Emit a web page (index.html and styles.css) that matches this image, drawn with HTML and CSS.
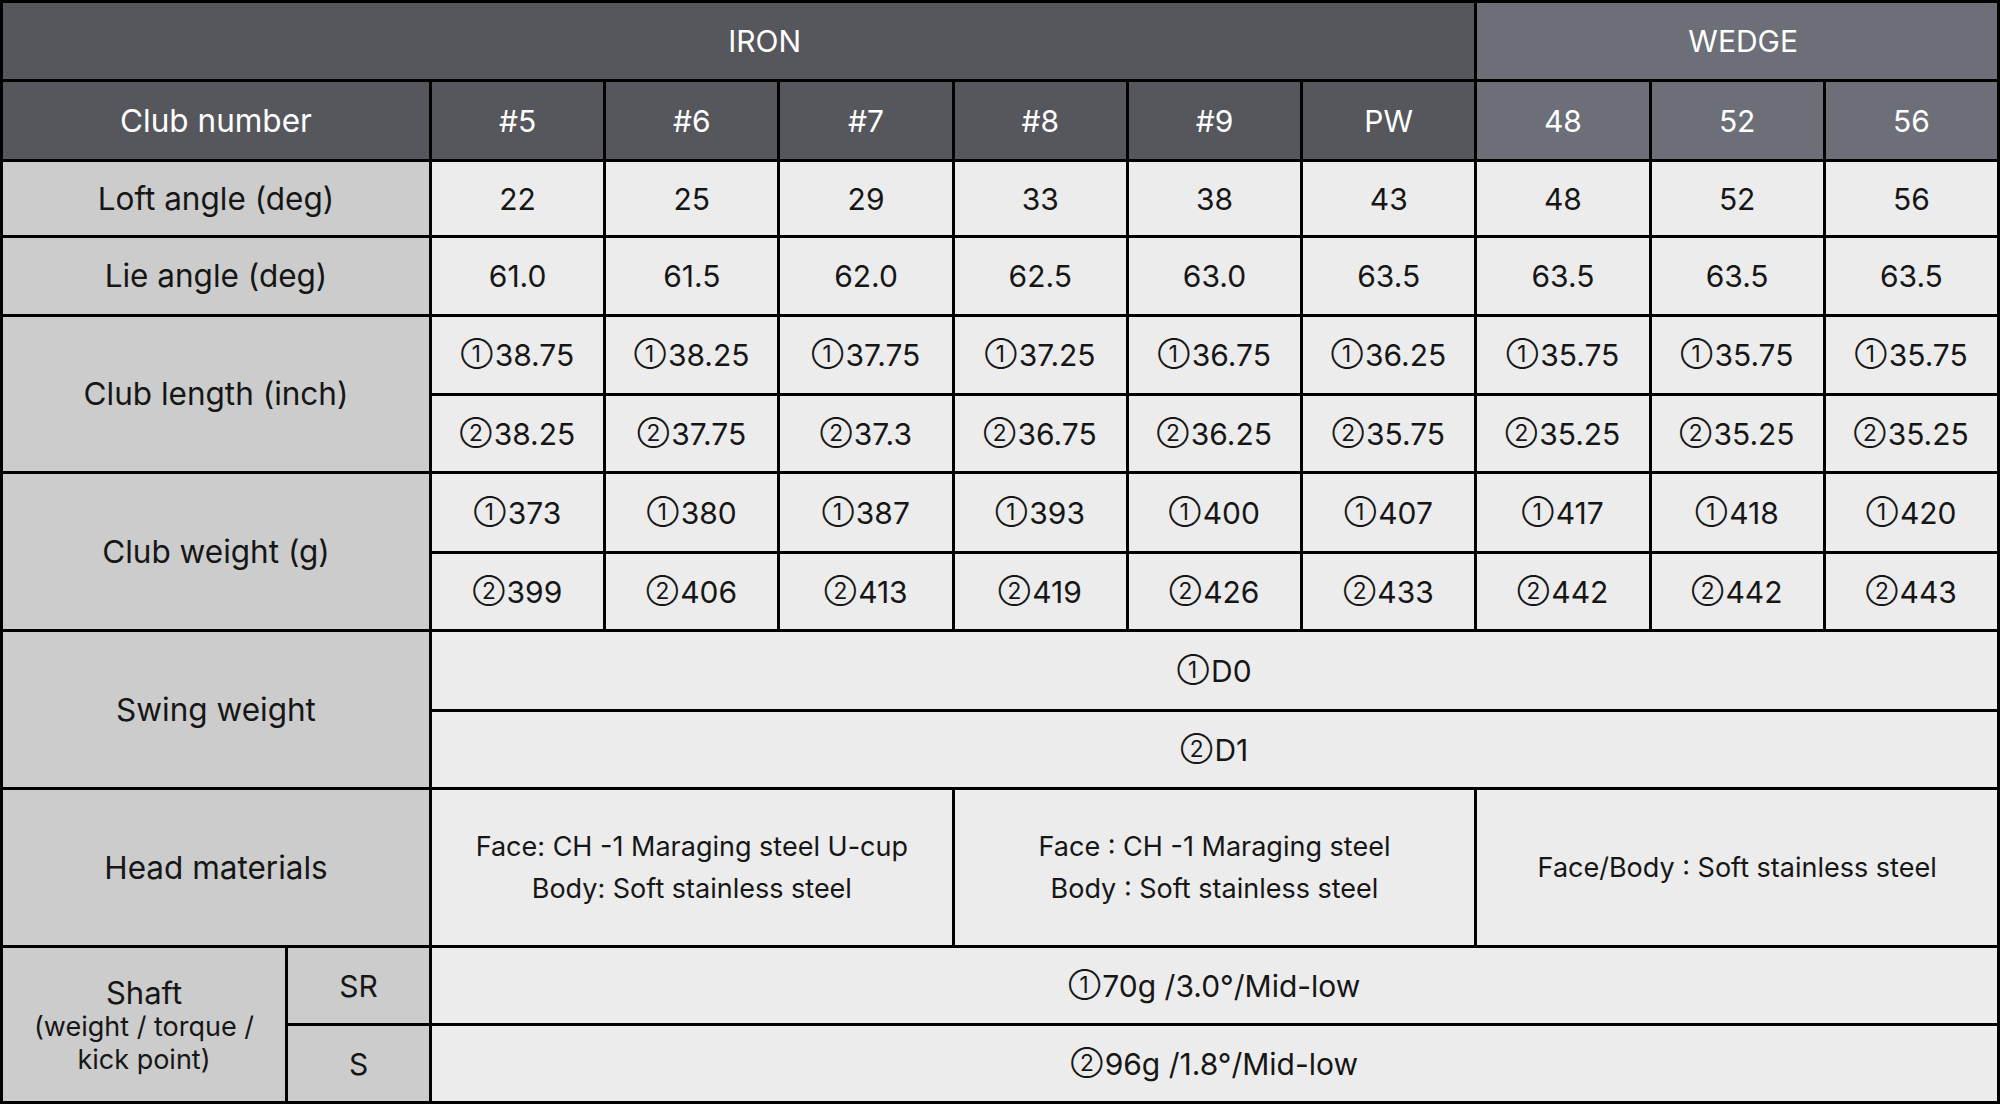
FILE: index.html
```html
<!DOCTYPE html>
<html lang="en">
<head>
<meta charset="utf-8">
<title>Iron / Wedge specifications</title>
<link rel="stylesheet" href="styles.css">
</head>
<body>
<div class="spec">
  <div class="cell head iron c8 iron-title">IRON</div>
  <div class="cell head wedge c3 wedge-title">WEDGE</div>

  <div class="cell head iron c2 big">Club number</div>
  <div class="cell head iron">#5</div>
  <div class="cell head iron">#6</div>
  <div class="cell head iron">#7</div>
  <div class="cell head iron">#8</div>
  <div class="cell head iron">#9</div>
  <div class="cell head iron">PW</div>
  <div class="cell head wedge">48</div>
  <div class="cell head wedge">52</div>
  <div class="cell head wedge">56</div>

  <div class="cell label c2 big">Loft angle (deg)</div>
  <div class="cell">22</div><div class="cell">25</div><div class="cell">29</div><div class="cell">33</div><div class="cell">38</div><div class="cell">43</div><div class="cell">48</div><div class="cell">52</div><div class="cell">56</div>

  <div class="cell label c2 big">Lie angle (deg)</div>
  <div class="cell">61.0</div><div class="cell">61.5</div><div class="cell">62.0</div><div class="cell">62.5</div><div class="cell">63.0</div><div class="cell">63.5</div><div class="cell">63.5</div><div class="cell">63.5</div><div class="cell">63.5</div>

  <div class="cell label c2 r2 big">Club length (inch)</div>
  <div class="cell"><span class="n">①</span>38.75</div><div class="cell"><span class="n">①</span>38.25</div><div class="cell"><span class="n">①</span>37.75</div><div class="cell"><span class="n">①</span>37.25</div><div class="cell"><span class="n">①</span>36.75</div><div class="cell"><span class="n">①</span>36.25</div><div class="cell"><span class="n">①</span>35.75</div><div class="cell"><span class="n">①</span>35.75</div><div class="cell"><span class="n">①</span>35.75</div>
  <div class="cell"><span class="n">②</span>38.25</div><div class="cell"><span class="n">②</span>37.75</div><div class="cell"><span class="n">②</span>37.3</div><div class="cell"><span class="n">②</span>36.75</div><div class="cell"><span class="n">②</span>36.25</div><div class="cell"><span class="n">②</span>35.75</div><div class="cell"><span class="n">②</span>35.25</div><div class="cell"><span class="n">②</span>35.25</div><div class="cell"><span class="n">②</span>35.25</div>

  <div class="cell label c2 r2 big">Club weight (g)</div>
  <div class="cell"><span class="n">①</span>373</div><div class="cell"><span class="n">①</span>380</div><div class="cell"><span class="n">①</span>387</div><div class="cell"><span class="n">①</span>393</div><div class="cell"><span class="n">①</span>400</div><div class="cell"><span class="n">①</span>407</div><div class="cell"><span class="n">①</span>417</div><div class="cell"><span class="n">①</span>418</div><div class="cell"><span class="n">①</span>420</div>
  <div class="cell"><span class="n">②</span>399</div><div class="cell"><span class="n">②</span>406</div><div class="cell"><span class="n">②</span>413</div><div class="cell"><span class="n">②</span>419</div><div class="cell"><span class="n">②</span>426</div><div class="cell"><span class="n">②</span>433</div><div class="cell"><span class="n">②</span>442</div><div class="cell"><span class="n">②</span>442</div><div class="cell"><span class="n">②</span>443</div>

  <div class="cell label c2 r2 big">Swing weight</div>
  <div class="cell c9"><span class="n">①</span>D0</div>
  <div class="cell c9"><span class="n">②</span>D1</div>

  <div class="cell label c2 big">Head materials</div>
  <div class="cell mat c3">Face: CH -1 Maraging steel U-cup<br>Body: Soft stainless steel</div>
  <div class="cell mat c3">Face : CH -1 Maraging steel<br>Body : Soft stainless steel</div>
  <div class="cell mat c3">Face/Body : Soft stainless steel</div>

  <div class="cell label r2 shaft"><span class="shaft-main">Shaft</span><span class="shaft-sub">(weight / torque /<br>kick point)</span></div>
  <div class="cell label">SR</div>
  <div class="cell c9"><span class="n">①</span>70g /3.0°/Mid-low</div>
  <div class="cell label">S</div>
  <div class="cell c9"><span class="n">②</span>96g /1.8°/Mid-low</div>
</div>
</body>
</html>
```

FILE: styles.css
```css
html, body {
  margin: 0;
  padding: 0;
  background: #000;
}

.spec {
  width: 2000px;
  height: 1104px;
  box-sizing: border-box;
  display: grid;
  grid-template-columns: 282px 141px repeat(9, 1fr);
  grid-template-rows: 76px 77px 73px 76px 76px 75px 77px 75px 77px 75px 155px 75px 75px;
  gap: 3px;
  padding: 3px;
  background: #000;
  font-family: Inter, "DejaVu Sans", sans-serif;
  color: #161616;
}

.cell {
  display: flex;
  align-items: center;
  justify-content: center;
  text-align: center;
  background: #ececec;
  font-size: 30px;
  line-height: 1.2;
  white-space: pre;
}

.big {
  font-size: 31.5px;
}

.n {
  font-size: 0.76em;
  margin-right: 2px;
  position: relative;
  top: -1px;
}

.head {
  color: #fff;
}

.iron {
  background: #56575c;
}

.wedge {
  background: #6c6f78;
}

.iron-title {
  padding-left: 52px;
}

.wedge-title {
  padding-left: 12px;
}

.label {
  background: #cccccc;
}

.mat {
  font-size: 27px;
  line-height: 42px;
}

.shaft {
  flex-direction: column;
  padding-top: 2px;
}

.shaft-main {
  font-size: 31px;
  line-height: 35px;
}

.shaft-sub {
  font-size: 27px;
  line-height: 33px;
}

.c2 { grid-column: span 2; }
.c3 { grid-column: span 3; }
.c8 { grid-column: span 8; }
.c9 { grid-column: span 9; }
.r2 { grid-row: span 2; }
```
